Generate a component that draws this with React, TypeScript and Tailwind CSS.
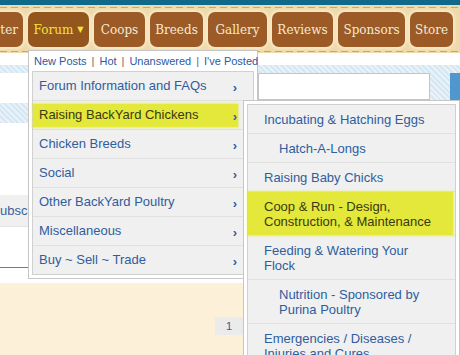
import React from "react";

const tabs = [
  { label: "ter", cls: "w-[23px] justify-end pr-[5px] rounded-l-none" },
  { label: "Forum", cls: "w-[61px] justify-center", active: true },
  { label: "Coops", cls: "w-[51px] justify-center" },
  { label: "Breeds", cls: "w-[53px] justify-center" },
  { label: "Gallery", cls: "w-[59px] justify-center" },
  { label: "Reviews", cls: "w-[61px] justify-center" },
  { label: "Sponsors", cls: "w-[67px] justify-center" },
  { label: "Store", cls: "w-[43px] justify-center" },
];

const forumItems = [
  "Forum Information and FAQs",
  "Raising BackYard Chickens",
  "Chicken Breeds",
  "Social",
  "Other BackYard Poultry",
  "Miscellaneous",
  "Buy ~ Sell ~ Trade",
];

const quickLinks = ["New Posts", "Hot", "Unanswered", "I've Posted"];

type SubItem = { lines: string[]; indent?: boolean; active?: boolean };

const subItems: SubItem[] = [
  { lines: ["Incubating & Hatching Eggs"] },
  { lines: ["Hatch-A-Longs"], indent: true },
  { lines: ["Raising Baby Chicks"] },
  { lines: ["Coop & Run - Design,", "Construction, & Maintenance"], active: true },
  { lines: ["Feeding & Watering Your", "Flock"] },
  { lines: ["Nutrition - Sponsored by", "Purina Poultry"], indent: true },
  { lines: ["Emergencies / Diseases /", "Injuries and Cures"] },
];

const hatch =
  "bg-[repeating-linear-gradient(45deg,#d4e7f2_0_2px,#e8f2f8_2px_4px)]";

function Dashes() {
  return (
    <div className="h-px w-full bg-[repeating-linear-gradient(90deg,#c9a56b_0_7px,transparent_7px_11px)]" />
  );
}

function NavBar() {
  return (
    <div className="flex h-[48px] flex-col bg-[#efd9a9] pt-[2px]">
      <Dashes />
      <div className="mt-[4px] flex h-[35px] gap-[5px]">
        {tabs.map((t) => (
          <div
            key={t.label}
            className={`flex h-[35px] shrink-0 items-center rounded-[7px] font-['DejaVu_Serif',serif] text-[12px] shadow-[0_0_3px_2px_#f8ebcb] ${t.cls} ${
              t.active ? "bg-[#93561d] text-[#f3e43c]" : "bg-[#9b5a26] text-[#f6ead3]"
            }`}
          >
            {t.label}
            {t.active && <span className="ml-[4px] text-[8px]">▼</span>}
          </div>
        ))}
      </div>
      <div className="mt-[4px]">
        <Dashes />
      </div>
    </div>
  );
}

function Background() {
  return (
    <>
      <div className="h-[5px] bg-[#11698a]" />
      <NavBar />
      <div className="flex h-[230px]">
        <div className="flex w-[28px] shrink-0 flex-col overflow-hidden">
          <div className="h-[12px]" />
          <div className={`h-[8px] ${hatch}`} />
          <div className="h-[30px]" />
          <div className={`h-[20px] ${hatch}`} />
          <div className="h-[72px]" />
          <div className="flex h-[32px] items-center whitespace-nowrap border-b border-[#e2e2e2] bg-[#f0f0f0] text-[13px] text-[#3a5f9c]">
            ubscri
          </div>
          <div className="h-[40px]" />
          <div className="h-px bg-[#3f8bc2]" />
          <div className="h-[14px]" />
        </div>
        <div className="w-[230px] shrink-0" />
        <div className="flex flex-1 flex-col">
          <div className="h-[12px]" />
          <div className={`flex h-[35px] pt-[8px] ${hatch}`}>
            <div className="h-[27px] w-[172px] border border-[#c4c4c4] bg-white" />
            <div className="ml-auto h-[27px] w-[10px] bg-[#4f97cc]" />
          </div>
        </div>
      </div>
      <div className="h-[72px] bg-[#fcf1d8] pt-[34px]">
        <div className="ml-[215px] flex h-[18px] w-[28px] items-center justify-center bg-[#ebebeb] text-[11px] text-[#3e5c8c]">
          1
        </div>
      </div>
    </>
  );
}

function ForumMenu() {
  return (
    <div className="absolute left-[28px] top-[50px] w-[230px] border border-[#c6c6c6] bg-white px-[3px] pb-[3px]">
      <div className="flex h-[20px] items-center whitespace-nowrap pl-[2px] text-[11px] text-[#2c5aa0]">
        {quickLinks.map((l, i) => (
          <React.Fragment key={l}>
            {i > 0 && <span className="mx-[5px] text-[#666]">|</span>}
            <span>{l}</span>
          </React.Fragment>
        ))}
      </div>
      <div className="border border-[#d0d0d0] bg-[#f0f0f0]">
        {forumItems.map((label, i) => {
          const active = i === 1;
          return (
            <div
              key={label}
              className={`flex h-[28px] items-center ${i > 0 ? "box-content border-t border-[#e0e0e0]" : ""}`}
            >
              <div
                className={`flex h-[23px] w-[205px] items-center justify-between pl-[6px] pr-[1px] text-[13px] ${
                  active
                    ? "bg-[#e3e83a] text-[#3a3a12] shadow-[0_0_2px_1px_rgba(227,232,58,0.6)]"
                    : "text-[#2f5d9e]"
                }`}
              >
                <span>{label}</span>
                <span className="mt-[4px] text-[13px] font-bold text-[#2f5d9e]">›</span>
              </div>
            </div>
          );
        })}
      </div>
    </div>
  );
}

function SubMenu() {
  return (
    <div className="absolute left-[243px] top-[100px] w-[217px] border border-[#c6c6c6] bg-white p-[3px]">
      <div className="border border-[#d0d0d0] bg-[#f0f0f0]">
        {subItems.map((it, i) => (
          <div key={it.lines[0]} className={i > 0 ? "border-t border-[#e0e0e0]" : ""}>
            <div
              className={`pb-[6px] pt-[7px] text-[13px] leading-[15px] ${it.indent ? "pl-[31px]" : "pl-[16px]"} ${
                it.active
                  ? "mr-[2px] bg-[#e3e83a] text-[#3a3a12] shadow-[0_0_2px_1px_rgba(227,232,58,0.6)]"
                  : "text-[#2f5d9e]"
              }`}
            >
              {it.lines.map((l, j) => (
                <div key={j} className="whitespace-nowrap">
                  {l}
                </div>
              ))}
            </div>
          </div>
        ))}
      </div>
    </div>
  );
}

export default function App() {
  return (
    <div className="relative h-[355px] w-[460px] overflow-hidden bg-white font-['Liberation_Sans',Arial,sans-serif]">
      <Background />
      <ForumMenu />
      <SubMenu />
    </div>
  );
}
